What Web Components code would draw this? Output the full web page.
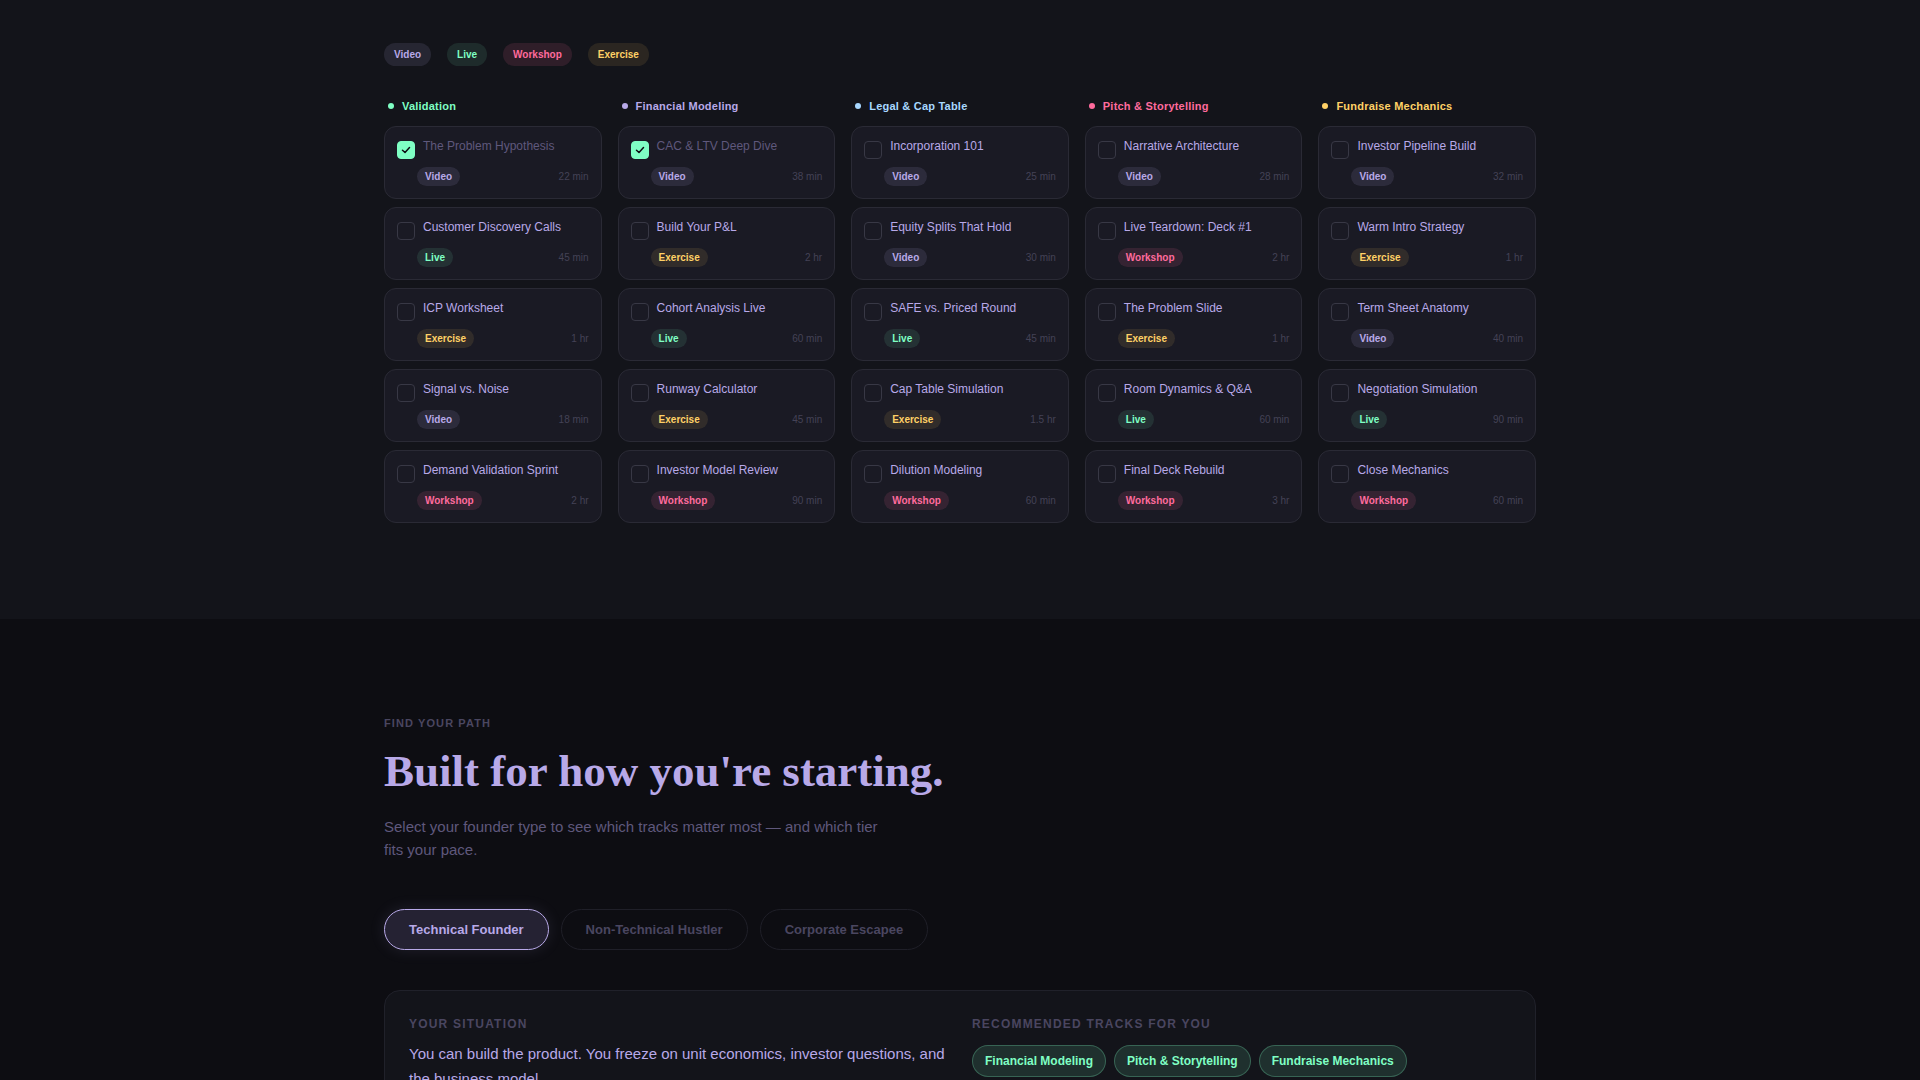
<!DOCTYPE html>
<html lang="en">
<head>
<meta charset="utf-8">
<title>Founder curriculum</title>
<style>
:root {
  --bg: #0d0d12;
  --surface: #13141a;
  --card: #1a1a24;
  --line: #2a2a35;
  --lavender: #b8a9e8;
  --mint: #7fffc4;
  --sky: #a8d8ff;
  --pink: #ff6b9d;
  --amber: #ffd166;
  --muted: #5f587c;
  --dim: #4a4660;
}
body {
  margin: 0;
  background: var(--bg);
  color: var(--lavender);
  font-family: "Liberation Sans", Arial, sans-serif;
  overflow-x: hidden;
}
</style>
</head>
<body>
<curriculum-board>
  <type-pill slot="legend" size="large" kind="video">Video</type-pill>
  <type-pill slot="legend" size="large" kind="live">Live</type-pill>
  <type-pill slot="legend" size="large" kind="workshop">Workshop</type-pill>
  <type-pill slot="legend" size="large" kind="exercise">Exercise</type-pill>

  <track-column name="Validation" tone="mint">
    <lesson-card kind="Video" time="22 min" done>The Problem Hypothesis</lesson-card>
    <lesson-card kind="Live" time="45 min">Customer Discovery Calls</lesson-card>
    <lesson-card kind="Exercise" time="1 hr">ICP Worksheet</lesson-card>
    <lesson-card kind="Video" time="18 min">Signal vs. Noise</lesson-card>
    <lesson-card kind="Workshop" time="2 hr">Demand Validation Sprint</lesson-card>
  </track-column>
  <track-column name="Financial Modeling" tone="lavender">
    <lesson-card kind="Video" time="38 min" done>CAC &amp; LTV Deep Dive</lesson-card>
    <lesson-card kind="Exercise" time="2 hr">Build Your P&amp;L</lesson-card>
    <lesson-card kind="Live" time="60 min">Cohort Analysis Live</lesson-card>
    <lesson-card kind="Exercise" time="45 min">Runway Calculator</lesson-card>
    <lesson-card kind="Workshop" time="90 min">Investor Model Review</lesson-card>
  </track-column>
  <track-column name="Legal &amp; Cap Table" tone="sky">
    <lesson-card kind="Video" time="25 min">Incorporation 101</lesson-card>
    <lesson-card kind="Video" time="30 min">Equity Splits That Hold</lesson-card>
    <lesson-card kind="Live" time="45 min">SAFE vs. Priced Round</lesson-card>
    <lesson-card kind="Exercise" time="1.5 hr">Cap Table Simulation</lesson-card>
    <lesson-card kind="Workshop" time="60 min">Dilution Modeling</lesson-card>
  </track-column>
  <track-column name="Pitch &amp; Storytelling" tone="pink">
    <lesson-card kind="Video" time="28 min">Narrative Architecture</lesson-card>
    <lesson-card kind="Workshop" time="2 hr">Live Teardown: Deck #1</lesson-card>
    <lesson-card kind="Exercise" time="1 hr">The Problem Slide</lesson-card>
    <lesson-card kind="Live" time="60 min">Room Dynamics &amp; Q&amp;A</lesson-card>
    <lesson-card kind="Workshop" time="3 hr">Final Deck Rebuild</lesson-card>
  </track-column>
  <track-column name="Fundraise Mechanics" tone="amber">
    <lesson-card kind="Video" time="32 min">Investor Pipeline Build</lesson-card>
    <lesson-card kind="Exercise" time="1 hr">Warm Intro Strategy</lesson-card>
    <lesson-card kind="Video" time="40 min">Term Sheet Anatomy</lesson-card>
    <lesson-card kind="Live" time="90 min">Negotiation Simulation</lesson-card>
    <lesson-card kind="Workshop" time="60 min">Close Mechanics</lesson-card>
  </track-column>
</curriculum-board>

<founder-path>
  <span slot="eyebrow">Find your path</span>
  <span slot="title">Built for how you're starting.</span>
  <span slot="intro">Select your founder type to see which tracks matter most — and which tier fits your pace.</span>
  <path-tab slot="tabs" selected>Technical Founder</path-tab>
  <path-tab slot="tabs">Non-Technical Hustler</path-tab>
  <path-tab slot="tabs">Corporate Escapee</path-tab>
  <situation-panel>
    <span slot="situation">You can build the product. You freeze on unit economics, investor questions, and the business model.</span>
    <track-chip slot="tracks">Financial Modeling</track-chip>
    <track-chip slot="tracks">Pitch &amp; Storytelling</track-chip>
    <track-chip slot="tracks">Fundraise Mechanics</track-chip>
  </situation-panel>
</founder-path>

<script>
function define(name, html, setup) {
  const template = document.createElement('template');
  template.innerHTML = html;
  customElements.define(name, class extends HTMLElement {
    constructor() {
      super();
      this.attachShadow({ mode: 'open' }).append(template.content.cloneNode(true));
    }
    connectedCallback() {
      if (setup) setup(this, this.shadowRoot);
    }
  });
}

define('type-pill', `
<style>
:host {
  display: block; padding: 2px 8px; border-radius: 12px;
  font-size: 10px; line-height: 15px; font-weight: 700; white-space: nowrap;
}
:host([size=large]) { padding: 4px 10px; }
:host([kind=video]) { color: var(--lavender); background: rgb(184 169 232 / .12); }
:host([kind=live]) { color: var(--mint); background: rgb(127 255 196 / .1); }
:host([kind=workshop]) { color: var(--pink); background: rgb(255 107 157 / .12); }
:host([kind=exercise]) { color: var(--amber); background: rgb(255 209 102 / .1); }
</style>
<slot></slot>`);

define('lesson-card', `
<style>
:host {
  display: block; padding: 12px; border: 1px solid var(--line);
  border-radius: 12px; background: var(--card);
}
.top { display: flex; gap: 8px; align-items: flex-start; }
.box { display: grid; margin-top: 2px; flex: none; }
input, svg { grid-area: 1 / 1; }
input {
  appearance: none; box-sizing: border-box; width: 18px; height: 18px; margin: 0;
  border: 1px solid #383845; border-radius: 4px; cursor: pointer;
}
input:checked { background: var(--mint); border-color: var(--mint); }
svg { width: 10px; height: 10px; place-self: center; visibility: hidden; pointer-events: none; }
input:checked + svg { visibility: visible; }
label { font-size: 12px; line-height: 14px; cursor: pointer; }
.top:has(input:checked) label { color: var(--muted); }
.meta { display: flex; justify-content: space-between; align-items: center; margin-top: 8px; padding-left: 20px; }
.time { font-size: 10px; line-height: 15px; color: #444256; }
</style>
<div class="top">
  <span class="box">
    <input type="checkbox" id="done">
    <svg viewBox="0 0 10 10" fill="none" stroke="#0d0d12" stroke-width="1.5" stroke-linecap="round" stroke-linejoin="round"><path d="M1.5 5.2 4 7.5 8.5 2.5"/></svg>
  </span>
  <label for="done"><slot></slot></label>
</div>
<div class="meta"><type-pill></type-pill><span class="time"></span></div>`,
(host, root) => {
  const pill = root.querySelector('type-pill');
  const kind = host.getAttribute('kind');
  pill.setAttribute('kind', kind.toLowerCase());
  pill.textContent = kind;
  root.querySelector('.time').textContent = host.getAttribute('time');
  root.querySelector('input').checked = host.hasAttribute('done');
});

define('track-column', `
<style>
:host { display: block; min-width: 0; }
h3 {
  display: flex; align-items: center; gap: 8px; margin: 0 0 12px; padding: 0 4px;
  font-size: 11px; line-height: 16px; font-weight: 700; letter-spacing: .02em;
}
h3::before { content: ""; width: 6px; height: 6px; border-radius: 50%; background: currentColor; }
.list { display: flex; flex-direction: column; gap: 8px; }
</style>
<h3></h3>
<div class="list"><slot></slot></div>`,
(host, root) => {
  const heading = root.querySelector('h3');
  heading.textContent = host.getAttribute('name');
  heading.style.color = 'var(--' + host.getAttribute('tone') + ')';
});

define('curriculum-board', `
<style>
:host { display: block; background: var(--surface); padding: 43px 24px 96px; }
.inner { max-width: 1152px; margin: 0 auto; }
.legend { display: flex; flex-wrap: wrap; gap: 16px; margin-bottom: 32px; }
.grid { display: grid; grid-template-columns: repeat(5, 1fr); gap: 16px; }
</style>
<section class="inner">
  <div class="legend"><slot name="legend"></slot></div>
  <div class="grid"><slot></slot></div>
</section>`);

define('path-tab', `
<style>
:host { display: block; }
button {
  display: block; padding: 12px 24px; border: 1px solid #1f1f28; border-radius: 24px;
  background: transparent; color: var(--dim); cursor: pointer;
  font: 700 13px/15px "Liberation Sans", Arial, sans-serif;
}
:host([selected]) button {
  color: var(--lavender); border-color: var(--lavender); background: #252233;
  box-shadow: 0 0 16px rgb(184 169 232 / .12);
}
</style>
<button type="button"><slot></slot></button>`,
(host, root) => {
  const button = root.querySelector('button');
  button.setAttribute('aria-pressed', host.hasAttribute('selected'));
  button.addEventListener('click', () => {
    for (const tab of host.parentElement.querySelectorAll('path-tab')) {
      tab.toggleAttribute('selected', tab === host);
      tab.shadowRoot.querySelector('button').setAttribute('aria-pressed', tab === host);
    }
  });
});

define('track-chip', `
<style>
:host {
  display: block; padding: 6px 12px; border: 1px solid rgb(127 255 196 / .25); border-radius: 16px;
  background: rgb(127 255 196 / .12); color: var(--mint);
  font-size: 12px; line-height: 18px; font-weight: 700; white-space: nowrap;
}
</style>
<slot></slot>`);

define('situation-panel', `
<style>
:host {
  display: grid; grid-template-columns: 1fr 1fr; gap: 24px; padding: 24px;
  border: 1px solid #20212a; border-radius: 16px; background: var(--surface);
}
h3 {
  margin: 0; font-size: 12px; line-height: 18px; font-weight: 700;
  letter-spacing: .1em; text-transform: uppercase; color: var(--dim);
}
p { margin: 8px 0 0; font-size: 15px; line-height: 25px; }
.chips { display: flex; flex-wrap: wrap; gap: 8px; margin-top: 12px; }
</style>
<div><h3>Your situation</h3><p><slot name="situation"></slot></p></div>
<div><h3>Recommended tracks for you</h3><div class="chips"><slot name="tracks"></slot></div></div>`);

define('founder-path', `
<style>
:host { display: block; padding: 96px 24px; }
.inner { max-width: 1152px; margin: 0 auto; }
.eyebrow {
  margin: 0 0 16px; font-size: 11px; line-height: 16px; font-weight: 700;
  letter-spacing: .1em; text-transform: uppercase; color: var(--dim);
}
h2 { margin: 0 0 20px; font: 700 45px/48px "Liberation Serif", "Times New Roman", serif; }
.intro { margin: 0; max-width: 500px; font-size: 15px; line-height: 23px; color: var(--muted); }
.tabs { display: flex; flex-wrap: wrap; gap: 12px; margin: 48px 0 40px; }
</style>
<section class="inner">
  <p class="eyebrow"><slot name="eyebrow"></slot></p>
  <h2><slot name="title"></slot></h2>
  <p class="intro"><slot name="intro"></slot></p>
  <div class="tabs"><slot name="tabs"></slot></div>
  <slot></slot>
</section>`);
</script>
</body>
</html>
